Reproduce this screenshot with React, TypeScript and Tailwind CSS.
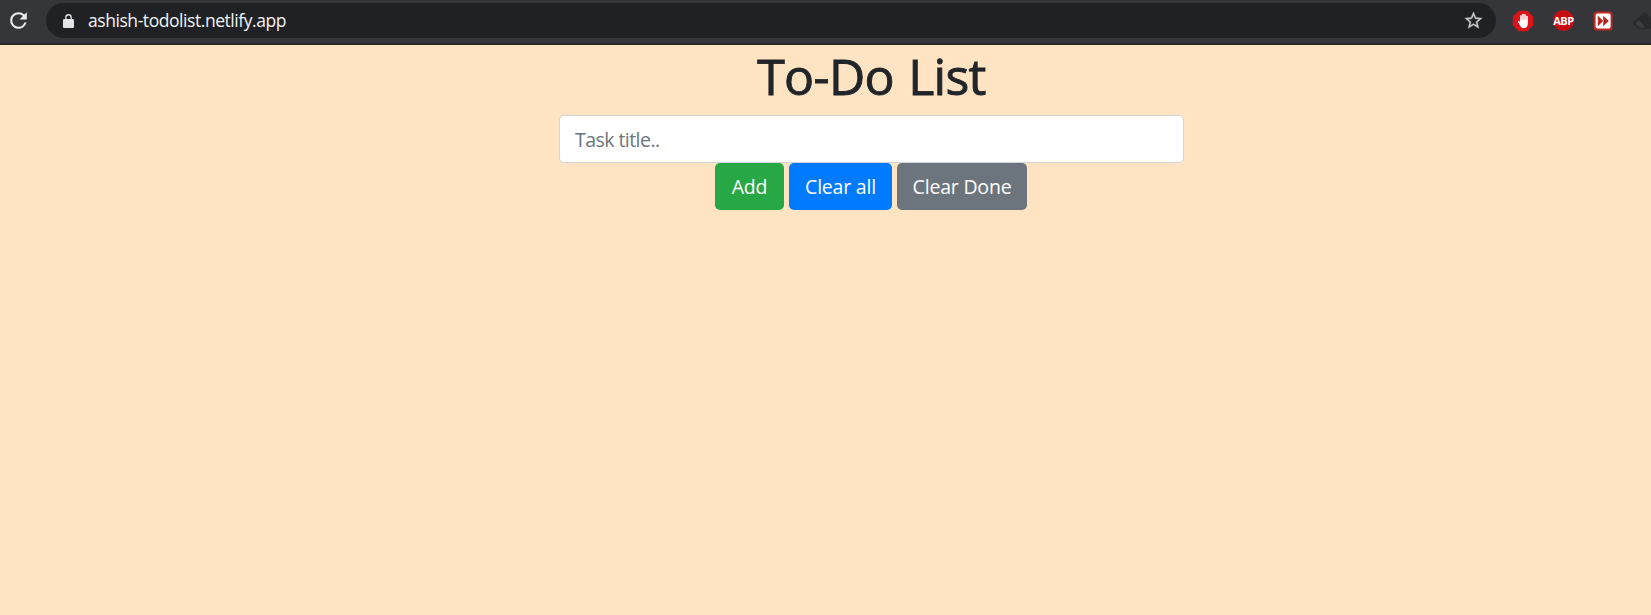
import React from "react";

function ReloadIcon() {
  return (
    <svg className="block size-[25px]" viewBox="0 0 24 24" fill="#e8eaed">
      <path d="M17.65 6.35A7.958 7.958 0 0 0 12 4a8 8 0 1 0 7.73 10h-2.08A5.99 5.99 0 0 1 12 18a6 6 0 1 1 0-12c1.66 0 3.14.69 4.22 1.78L13 11h7V4l-2.35 2.35z" />
    </svg>
  );
}

function LockIcon() {
  return (
    <svg className="block h-[14px] w-[11px]" viewBox="0 0 11 14" fill="#e2e3e5">
      <path
        fillRule="evenodd"
        d="M2.2 5V3.4a3.3 3.3 0 0 1 6.6 0V5h.9c.7 0 1.3.6 1.3 1.3v6.4c0 .7-.6 1.3-1.3 1.3H1.3C.6 14 0 13.4 0 12.7V6.3C0 5.6.6 5 1.3 5zM3.5 5h4V3.4a2 2 0 0 0-4 0z"
      />
    </svg>
  );
}

function StarIcon() {
  return (
    <svg className="block size-[21px]" viewBox="0 0 24 24" fill="#c6c8cb" stroke="#c6c8cb" strokeWidth=".35">
      <path d="M22 9.24l-7.19-.62L12 2 9.19 8.63 2 9.24l5.46 4.73L5.82 21 12 17.27 18.18 21l-1.63-7.03L22 9.24zM12 15.4l-3.76 2.27 1-4.28-3.32-2.88 4.38-.38L12 6.1l1.71 4.04 4.38.38-3.32 2.88 1 4.28L12 15.4z" />
    </svg>
  );
}

function HandIcon() {
  return (
    <svg className="block size-[22px]" viewBox="0 0 22 22">
      <path d="M6.7.8h8.6l5.9 5.9v8.6l-5.9 5.9H6.7L.8 15.3V6.7z" fill="#d9141b" />
      <g stroke="#fff" strokeWidth="1.6" strokeLinecap="round" fill="none">
        <path d="M9 11V5.9M11 10.5V4.6M13 10.5V4.9M15 11V6.5" />
      </g>
      <path
        d="M8.2 9.8h7.6v4c0 2.7-1.4 4.3-3.9 4.3-2 0-2.9-.8-3.7-2.4l-2.200-3.900c-.3-.7.7-1.300 1.300-.6l.9 1z"
        fill="#fff"
      />
    </svg>
  );
}

function ForwardIcon() {
  return (
    <svg className="block size-[20px]" viewBox="0 0 20 20">
      <rect x=".5" y=".5" width="19" height="19" rx="3.5" fill="#c1281f" />
      <rect x="2.6" y="2.6" width="15" height="14.800" rx="2" fill="#fff" />
      <path d="M4.800 4.700l5.400 5.300-5.400 5.300zM10.200 4.700l5.600 5.300-5.600 5.300z" fill="#b3261e" />
      <path d="M4.800 9.200l.8.8-.8.8zM10.200 9.200l.8.8-.8.8z" fill="#fff" />
    </svg>
  );
}

function EraserIcon() {
  return (
    <svg className="block h-[20px] w-[18px] shrink-0" viewBox="0 0 18 20">
      <path d="M11.5 1L18 7.5V18H5.8L.7 12.9c-.6-.6-.6-1.200 0-1.800z" fill="#292a2d" />
      <path d="M5.7 9.300l6.100 6-1.400 1.400H6.500L2.600 12.400z" fill="#3d3e41" />
    </svg>
  );
}

function BrowserBar() {
  return (
    <header className="flex h-[45px] items-start border-b-2 border-[#29262a] bg-[#35363a] pt-[3px] pl-[6px]">
      <div className="mt-[5px] w-[40px] shrink-0">
        <ReloadIcon />
      </div>
      <div className="flex h-[35px] w-[1450px] shrink-0 items-center rounded-full bg-[#202124] pr-[12px] pl-[17px]">
        <LockIcon />
        <span className="ml-[14px] flex-1 pb-[2px] text-[17.5px] leading-[24px] tracking-[-0.44px] text-[#f1f3f4]">
          ashish-todolist.netlify.app
        </span>
        <StarIcon />
      </div>
      <div className="flex h-[35px] shrink-0 items-center pl-[16px]">
        <HandIcon />
        <div className="ml-[19px] flex size-[21px] items-center justify-center rounded-full bg-[#c70d12]">
          <span className="text-[11px] leading-none font-bold tracking-[-0.4px] text-white">ABP</span>
        </div>
        <div className="ml-[19px]">
          <ForwardIcon />
        </div>
        <div className="ml-[20px]">
          <EraserIcon />
        </div>
      </div>
    </header>
  );
}

export default function App() {
  return (
    <div className="h-screen overflow-hidden bg-[#ffe4c4] font-['Open_Sans','Noto_Sans',sans-serif]">
      <BrowserBar />
      <main className="ml-[559px] flex w-[625px] flex-col items-center">
        <h1 className="h-[70px] pt-px text-[50px] leading-[60px] font-medium tracking-[-0.7px] [word-spacing:2px] whitespace-nowrap text-[#212529] [-webkit-text-stroke:0.9px_#212529]">
          To-Do List
        </h1>
        <input
          className="h-[48px] w-full rounded-[5px] border border-[#ced4da] bg-white px-[15px] text-[19.5px] tracking-[-0.55px] text-[#495057] outline-none placeholder:text-[#6c757d]"
          placeholder="Task title.."
        />
        <div className="flex h-[47px] gap-[5px] pr-px text-[19.5px] tracking-[-0.2px] whitespace-nowrap text-white">
          <button className="w-[69px] rounded-[5px] bg-[#28a745]">Add</button>
          <button className="w-[103px] rounded-[5px] bg-[#007bff]">Clear all</button>
          <button className="w-[130px] rounded-[5px] bg-[#6c757d]">Clear Done</button>
        </div>
      </main>
    </div>
  );
}
